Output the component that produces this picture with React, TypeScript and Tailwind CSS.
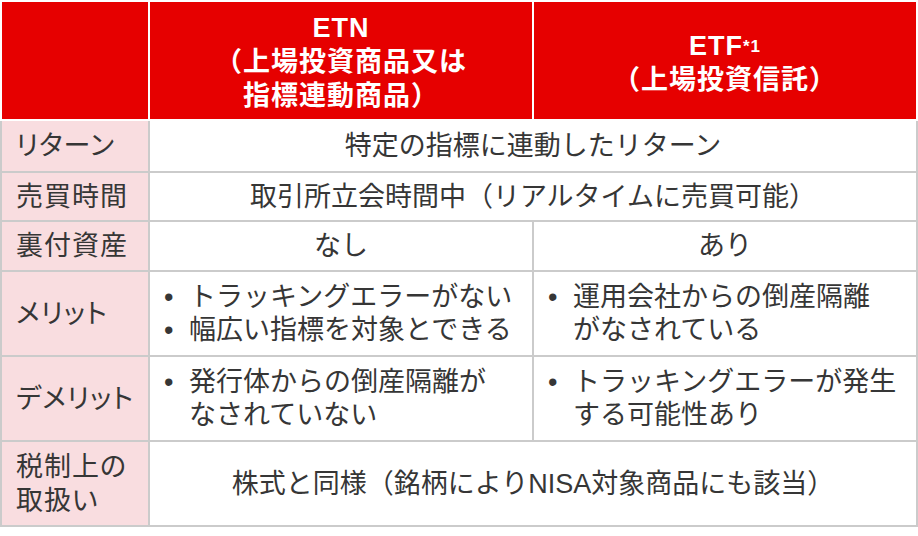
export default function App() {
  const font = { fontFamily: '"Liberation Sans", "Noto Sans CJK JP", sans-serif' }
  const label = 'bg-[#f9dde0] flex items-center pl-[14px] text-[27px] leading-[34px] text-[#363636] [font-feature-settings:"palt"] tracking-[1px]'
  const center = 'bg-white flex items-center justify-center text-[27px] leading-[34px] text-[#363636]'
  const list = 'bg-white flex flex-col justify-center pl-[14px] text-[27px] leading-[33px] text-[#363636]'

  return (
    <div className="w-[918px] h-[536px] bg-white" style={font}>
      <div className="flex flex-col gap-[2px]">
        {/* Header */}
        <div className="grid grid-cols-[146px_382px_382px] gap-[2px] pt-[2px] pl-[2px] h-[119px]">
          <div className="bg-[#e60000]" />
          <div className="bg-[#e60000] flex flex-col items-center justify-center text-white font-bold text-[27px] leading-[34px] tracking-[1px] pt-[2px]">
            <span>ETN</span>
            <span>（上場投資商品又は</span>
            <span>指標連動商品）</span>
          </div>
          <div className="bg-[#e60000] flex flex-col items-center justify-center text-white font-bold text-[27px] leading-[34px] tracking-[1px] pt-[4px]">
            <span>
              ETF<sup className="text-[17px] relative -top-[3px]">*1</sup>
            </span>
            <span>（上場投資信託）</span>
          </div>
        </div>

        {/* Body */}
        <div className="grid grid-cols-[146px_382px_382px] grid-rows-[50px_47px_48px_83px_83px_83px] gap-[2px] px-[2px] pb-[2px] bg-[#cbcbcb]">
          <div className={label}>リターン</div>
          <div className={`${center} col-span-2`}>特定の指標に連動したリターン</div>

          <div className={label}>売買時間</div>
          <div className={`${center} col-span-2`}>取引所立会時間中（リアルタイムに売買可能）</div>

          <div className={label}>裏付資産</div>
          <div className={center}>なし</div>
          <div className={center}>あり</div>

          <div className={label}>メリット</div>
          <div className={list}>
            <div className="flex"><span className="w-[25px] shrink-0">•</span><span>トラッキングエラーがない</span></div>
            <div className="flex"><span className="w-[25px] shrink-0">•</span><span>幅広い指標を対象とできる</span></div>
          </div>
          <div className={list}>
            <div className="flex"><span className="w-[25px] shrink-0">•</span><span>運用会社からの倒産隔離<br />がなされている</span></div>
          </div>

          <div className={label}>デメリット</div>
          <div className={list}>
            <div className="flex"><span className="w-[25px] shrink-0">•</span><span>発行体からの倒産隔離が<br />なされていない</span></div>
          </div>
          <div className={list}>
            <div className="flex"><span className="w-[25px] shrink-0">•</span><span>トラッキングエラーが発生<br />する可能性あり</span></div>
          </div>

          <div className={label}>税制上の<br />取扱い</div>
          <div className={`${center} col-span-2`}>株式と同様（銘柄によりNISA対象商品にも該当）</div>
        </div>
      </div>
    </div>
  )
}
